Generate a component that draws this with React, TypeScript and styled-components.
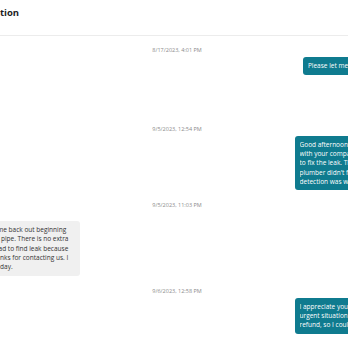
import React from "react";
import styled, { createGlobalStyle } from "styled-components";

const GlobalStyle = createGlobalStyle`
  html, body {
    margin: 0;
    padding: 0;
    overflow: hidden;
    background: #ffffff;
  }
  body {
    font-family: "Open Sans", "Liberation Sans", sans-serif;
    -webkit-font-smoothing: antialiased;
  }
`;

const Page = styled.div`
  width: 568px;
  margin-left: -110px;
  display: flex;
  flex-direction: column;
  background: #ffffff;
`;

const Header = styled.header`
  box-sizing: border-box;
  height: 36px;
  border-bottom: 1px solid #ececec;
  padding: 6px 0 0 66px;
  display: flex;
  align-items: flex-start;
`;

const Title = styled.h1`
  margin: 0;
  font-family: "Open Sans", "Liberation Sans", sans-serif;
  font-size: 9.5px;
  font-weight: 700;
  line-height: 13.6px;
  color: #1e1e1e;
`;

const MessageList = styled.main`
  display: flex;
  flex-direction: column;
  padding: 10.8px 13px 0 19px;
`;

const Group = styled.section<{ $side: "sent" | "received" }>`
  display: flex;
  flex-direction: column;
  align-items: ${(p) => (p.$side === "sent" ? "flex-end" : "flex-start")};
  margin-bottom: 12px;
`;

const Timestamp = styled.div`
  align-self: stretch;
  text-align: center;
  font-size: 5.5px;
  line-height: 7px;
  color: #8b8b8b;
  margin-bottom: 3px;
`;

const ReceivedRow = styled.div`
  display: flex;
  align-items: flex-start;
  gap: 5px;
`;

const Avatar = styled.div`
  flex: none;
  width: 16px;
  height: 16px;
  margin-top: 8.5px;
  border-radius: 50%;
  background: #d9dee2;
`;

const ReceivedColumn = styled.div`
  display: flex;
  flex-direction: column;
  align-items: flex-start;
`;

const Sender = styled.div`
  font-size: 6px;
  line-height: 8.5px;
  color: #777777;
  padding-left: 4px;
`;

const Bubble = styled.div<{ $side: "sent" | "received"; $full?: boolean }>`
  box-sizing: border-box;
  max-width: 150px;
  width: ${(p) => (p.$full ? "150px" : "auto")};
  padding: 4.4px 4.5px;
  border-radius: 3px;
  font-size: 6.5px;
  line-height: 9.2px;
  background: ${(p) => (p.$side === "sent" ? "#0f7b8f" : "#f0f0f0")};
  color: ${(p) => (p.$side === "sent" ? "#ffffff" : "#333333")};
`;

const Line = styled.span`
  display: block;
  white-space: pre;
  overflow: hidden;
`;

const Attachment = styled.div`
  margin-top: 4px;
  width: 60px;
  height: 34.8px;
  border-radius: 3px;
  background: #e9eef0;
`;

type Msg = {
  time: string;
  side: "sent" | "received";
  lines: string[];
  full?: boolean;
  attachment?: boolean;
};

const messages: Msg[] = [
  {
    time: "8/17/2023, 4:01 PM",
    side: "sent",
    lines: ["Please let me know the status of my refund."],
    attachment: true,
  },
  {
    time: "9/5/2023, 12:54 PM",
    side: "sent",
    full: true,
    lines: [
      "Good afternoon: I had an issue",
      "with your company's plumber who",
      "to fix the leak. The problem is the",
      "plumber didn't find the leak and the",
      "detection was wrong, so I need help.",
    ],
  },
  {
    time: "9/5/2023, 11:03 PM",
    side: "received",
    full: true,
    lines: [
      "Our plumbers will come back out beginning",
      "of this week to fix the pipe. There is no extra",
      "charge, since we all had to find leak because",
      "it was not shown. Thanks for contacting us. I",
      "hope you have a nice day.",
    ],
  },
  {
    time: "9/6/2023, 12:58 PM",
    side: "sent",
    full: true,
    lines: [
      "I appreciate your help, but this was",
      "urgent situation and I need the",
      "refund, so I could pay another one.",
    ],
  },
];

export default function App() {
  return (
    <>
      <GlobalStyle />
      <Page>
        <Header>
          <Title>Conversation</Title>
        </Header>
        <MessageList>
          {messages.map((m, i) => {
            const bubble = (
              <Bubble $side={m.side} $full={m.full}>
                {m.lines.map((l, j) => (
                  <Line key={j}>{l}</Line>
                ))}
              </Bubble>
            );
            return (
              <Group key={i} $side={m.side}>
                <Timestamp>{m.time}</Timestamp>
                {m.side === "received" ? (
                  <ReceivedRow>
                    <Avatar />
                    <ReceivedColumn>
                      <Sender>Support</Sender>
                      {bubble}
                    </ReceivedColumn>
                  </ReceivedRow>
                ) : (
                  bubble
                )}
                {m.attachment && <Attachment />}
              </Group>
            );
          })}
        </MessageList>
      </Page>
    </>
  );
}
